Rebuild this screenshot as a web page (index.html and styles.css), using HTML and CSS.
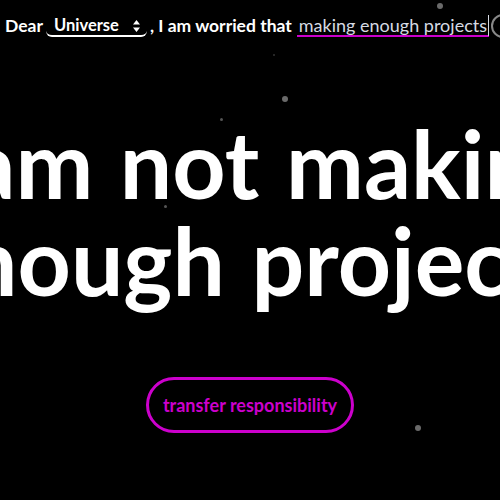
FILE: index.html
```html
<!DOCTYPE html>
<html>
<head>
<meta charset="utf-8">
<link rel="stylesheet" href="styles.css">
</head>
<body>
<div class="page">
  <span class="dot big" style="left:437px;top:3px"></span>
  <span class="dot big" style="left:282px;top:96px"></span>
  <span class="dot small" style="left:220px;top:118px"></span>
  <span class="dot small" style="left:164px;top:205px"></span>
  <span class="dot tiny" style="left:273px;top:54px"></span>
  <span class="dot big" style="left:415px;top:425px"></span>

  <div class="sentence">
    <span class="word">Dear</span>
    <span class="select">
      <span class="sel-text">Universe</span>
      <svg class="arrows" width="9" height="14" viewBox="0 0 9 14"><path d="M4.5 1 L8 5.5 H1 Z M4.5 13 L8 8.5 H1 Z" fill="#fff"/></svg>
    </span>
    <span class="word comma">, I am worried that</span>
    <span class="field"><span class="field-text">making enough projects</span><span class="caret"></span></span>
    <span class="ring"></span>
  </div>

  <div class="headline">
    <div class="line">I am not making</div>
    <div class="line">enough projects</div>
  </div>

  <div class="actions">
    <button class="cta">transfer responsibility</button>
  </div>
</div>
</body>
</html>
```
FILE: styles.css
```css
html, body {
  margin: 0;
  padding: 0;
  background: #000;
}
body {
  width: 500px;
  height: 500px;
  overflow: hidden;
  font-family: "Lato", "Liberation Sans", sans-serif;
}
.page {
  position: relative;
  width: 500px;
  height: 500px;
  overflow: hidden;
}
.dot {
  position: absolute;
  border-radius: 50%;
  background: #6a6a6a;
}
.dot.big { width: 6px; height: 6px; }
.dot.small { width: 3px; height: 3px; background: #555; }
.dot.tiny { width: 2px; height: 2px; background: #333; }

.sentence {
  display: flex;
  align-items: flex-start;
  white-space: nowrap;
  padding: 15px 0 0 5px;
  height: 26px;
  color: #fff;
  font-size: 17.5px;
  font-weight: 700;
  line-height: 21px;
}
.sentence > * { flex: none; }
.select {
  box-sizing: border-box;
  display: flex;
  align-items: center;
  justify-content: space-between;
  margin-left: 3px;
  padding: 0 6px 0 8px;
  height: 22px;
  width: 101px;
  border-bottom: 2px solid #fff;
  border-radius: 0 0 6px 6px;
  font-size: 16.5px;
}
.arrows { margin-top: 1px; }
.comma { margin-left: 3px; }
.field {
  box-sizing: border-box;
  display: flex;
  align-items: flex-start;
  margin-left: 5px;
  padding-left: 2px;
  width: 192px;
  height: 22px;
  border-bottom: 2px solid #cc00cc;
  color: #d6dae3;
  font-weight: 400;
  font-size: 18px;
}
.caret {
  width: 1px;
  height: 21px;
  background: #d6dae3;
  margin-left: 1px;
}
.ring {
  margin-left: 2px;
  margin-top: -1px;
  width: 20px;
  height: 20px;
  border: 2px solid #888;
  border-radius: 50%;
}

.headline {
  display: flex;
  flex-direction: column;
  align-items: center;
  margin-top: 74px;
  color: #fff;
  font-size: 93px;
  font-weight: 700;
  line-height: 97px;
  word-spacing: 4px;
  white-space: nowrap;
}
.line {
  display: flex;
  justify-content: center;
  width: 500px;
}

.actions {
  display: flex;
  justify-content: center;
  margin-top: 68px;
}
.cta {
  width: 208px;
  height: 56px;
  border: 3px solid #cc00cc;
  border-radius: 28px;
  background: transparent;
  color: #cc00cc;
  font-family: "Lato", "Liberation Sans", sans-serif;
  font-size: 18px;
  font-weight: 700;
  padding: 0;
}
```
